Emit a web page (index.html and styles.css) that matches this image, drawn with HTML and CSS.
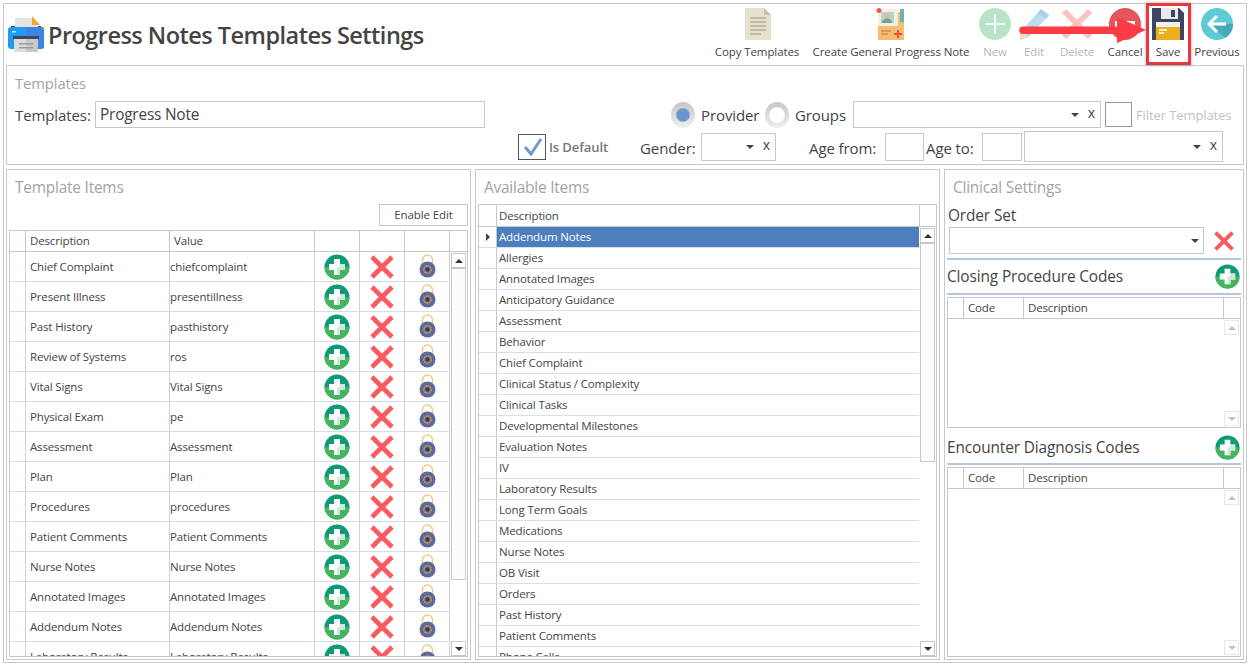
FILE: index.html
```
<!DOCTYPE html>
<html lang="en">
<head>
<meta charset="utf-8">
<title>Progress Notes Templates Settings</title>
<link rel="stylesheet" href="styles.css">
</head>
<body>
<svg class="defs" width="0" height="0">
  <symbol id="plus" viewBox="0 0 26 26">
    <circle cx="13" cy="13" r="12.5" fill="#0f9a76"/>
    <path d="M.5 13a12.500 12.500 0 0 0 25 0z" fill="#44b45f"/>
    <path d="M10 5h6v5h5v6h-5v5h-6v-5H5v-6h5z" fill="#fff"/>
    <path d="M13 13h3v-3h5v6h-5v5h-3z" fill="#cfe8dc"/>
  </symbol>
  <symbol id="cross" viewBox="0 0 26 26">
    <path d="M3 3l20 20M23 3L3 23" stroke="#fb5a60" stroke-width="4.600" fill="none"/>
  </symbol>
  <symbol id="lock" viewBox="0 0 17 24">
    <path d="M3.500 10V6a5 5 0 0 1 10 0v4" fill="none" stroke="#f2c98a" stroke-width="1.500"/>
    <circle cx="8.500" cy="15.500" r="8" fill="#5a689f"/>
    <circle cx="8.500" cy="15.500" r="3.600" fill="none" stroke="#c8953c" stroke-width="1.800" stroke-dasharray="1.800 .6"/>
    <circle cx="8.500" cy="15.500" r="2" fill="#2f3b66"/>
  </symbol>
</svg>
<div class="app">
  <header class="topbar">
    <div class="brand">
      <svg class="logo" width="36" height="36" viewBox="0 0 36 36">
        <path d="M3 10h30v8H3z" fill="#4a4a4a"/>
        <path d="M7 2h17l6 6v14H7z" fill="#e4e4e4"/>
        <path d="M24 0l8 9h-8z" fill="#f5a53a"/>
        <rect y="11" width="36" height="22" rx="3" fill="#1f9bf5"/>
        <path d="M18 11h15a3 3 0 0 1 3 3v16a3 3 0 0 1-3 3H18z" fill="#3d86e0"/>
        <rect x="5" y="20" width="26" height="3" fill="#3d4a5a"/>
        <path d="M6 23h24v13H6z" fill="#dcdcdc"/>
        <path d="M18 23h12v13H18z" fill="#c9c9c9"/>
        <path d="M11 27h14v1.500H11zM11 31h14v1.500H11z" fill="#999"/>
        <rect x="4" y="15" width="4" height="1.500" fill="#bfe3ff"/>
      </svg>
      <h1 class="title">Progress Notes Templates Settings</h1>
    </div>
    <nav class="tools">
      <div class="tool w-copy">
        <svg class="ticon" width="28" height="32" viewBox="1 0 28 32"><path d="M3 0h19l7 7v25H3z" fill="#e6e1cb"/><path d="M22 0l7 7h-7z" fill="#c8c2a8"/><path d="M8 10h16M8 14h16M8 18h16M8 22h16M8 26h11" stroke="#b5af96" stroke-width="1.400"/></svg>
        <span>Copy Templates</span>
      </div>
      <div class="tool w-create">
        <svg class="ticon" width="30" height="32" viewBox="1 0 30 32"><path d="M3 4h26v28H3z" fill="#f5bc74"/><path d="M25 1h4v13h-4z" fill="#66b8b8"/><path d="M3 1h20v17H3z" fill="#fbeedd"/><rect x="6" y="4" width="13" height="11" fill="#a9d8dc"/><circle cx="12" cy="8" r="3" fill="#e8b98e"/><path d="M7 15c0-6 10-6 10 0z" fill="#6fa58c"/><circle cx="4" cy="2.500" r="2.500" fill="#e45a4f"/><path d="M6 23h10M6 26h7" stroke="#b57f3e" stroke-width="1.200"/><path d="M22 22h2v3h3v2h-3v3h-2v-3h-3v-2h3z" fill="#e8503f"/></svg>
        <span>Create General Progress Note</span>
      </div>
      <div class="tool w-new dim">
        <svg class="ticon" width="32" height="32" viewBox="0 0 32 32"><circle cx="16" cy="16" r="16" fill="#b9e2c8"/><path d="M16 6v20M6 16h20" stroke="#fff" stroke-width="1.600"/></svg>
        <span>New</span>
      </div>
      <div class="tool w-edit dim">
        <svg class="ticon" width="32" height="32" viewBox="0 0 32 32"><path d="M23 1l8 6L11 29l-9 3 1-9z" fill="#bcdcf0"/><path d="M23 1l8 6-3 4-8-6z" fill="#a9d0e8"/><path d="M3 23l8 6-9 3z" fill="#f1dcc4"/></svg>
        <span>Edit</span>
      </div>
      <div class="tool w-del dim">
        <svg class="ticon" width="32" height="32" viewBox="0 0 32 32"><path d="M3 3l26 26M29 3L3 29" stroke="#fcc1c1" stroke-width="6" fill="none"/></svg>
        <span>Delete</span>
      </div>
      <div class="tool w-cancel">
        <svg class="ticon" width="32" height="32" viewBox="0 0 32 32"><circle cx="16" cy="16" r="16" fill="#e5565c"/><rect x="6" y="13" width="20" height="6" fill="#fff"/></svg>
        <span>Cancel</span>
      </div>
      <div class="tool w-save">
        <svg class="ticon" width="32" height="32" viewBox="0 0 32 32"><path d="M0 0h27l5 5v27H0z" fill="#3f4560"/><path d="M9 0h17v11H9z" fill="#e9e9e9"/><rect x="19" y="2" width="4" height="7" fill="#3f4560"/><rect x="4" y="14" width="24" height="18" fill="#eef0f2"/><rect x="4" y="19" width="24" height="13" fill="#ecb01f"/><path d="M7 22h8M7 25h5" stroke="#fff" stroke-width="1.300"/></svg>
        <span>Save</span>
      </div>
      <div class="tool w-prev">
        <svg class="ticon" width="32" height="32" viewBox="0 0 32 32"><circle cx="16" cy="16" r="16" fill="#5dcad6"/><path d="M9 16l15 14a16 16 0 0 0 8-14z" fill="#46aab8"/><path d="M16 8l-8 8 8 8M8 16h17" stroke="#fff" stroke-width="3" fill="none"/></svg>
        <span>Previous</span>
      </div>
    </nav>
  </header>

  <section class="panel templates">
    <h2 class="heading">Templates</h2>
    <div class="trow">
      <label class="lbl tl">Templates:</label>
      <div class="box name">Progress Note</div>
      <span class="radio on"></span><span class="lbl provider">Provider</span>
      <span class="radio"></span><span class="lbl groups">Groups</span>
      <div class="box combo c-main"><i class="caret"></i><b class="clr">x</b></div>
      <div class="box small"></div>
      <span class="filter">Filter Templates</span>
    </div>
    <div class="trow second">
      <span class="check"><svg width="25" height="24" viewBox="0 0 25 24"><path d="M5 12l6 7L21 4" fill="none" stroke="#6f9bd2" stroke-width="3"/></svg></span>
      <span class="isdef">Is Default</span>
      <span class="lbl gender">Gender:</span>
      <div class="box combo c-gender"><i class="caret"></i><b class="clr">x</b></div>
      <span class="lbl agefrom">Age from:</span>
      <div class="box agebox"></div>
      <span class="lbl ageto">Age to:</span>
      <div class="box agebox two"></div>
      <div class="box combo c-age"><i class="caret"></i><b class="clr">x</b></div>
    </div>
  </section>

  <main class="columns">
    <section class="panel col">
      <h2 class="heading">Template Items</h2>
      <div class="btnrow"><div class="btn">Enable Edit</div></div>
      <div class="grid items">
        <div class="ghead"><span class="c0"></span><span class="c1">Description</span><span class="c2">Value</span><span class="c3"></span><span class="c3"></span><span class="c3"></span></div>
        <div class="gbody">
          <div class="rows">
            <div class="irow"><span class="c0"></span><span class="c1">Chief Complaint</span><span class="c2">chiefcomplaint</span><span class="c3"><svg class="ip"><use href="#plus"/></svg></span><span class="c3"><svg class="ix"><use href="#cross"/></svg></span><span class="c3"><svg class="il"><use href="#lock"/></svg></span></div>
            <div class="irow"><span class="c0"></span><span class="c1">Present Illness</span><span class="c2">presentillness</span><span class="c3"><svg class="ip"><use href="#plus"/></svg></span><span class="c3"><svg class="ix"><use href="#cross"/></svg></span><span class="c3"><svg class="il"><use href="#lock"/></svg></span></div>
            <div class="irow"><span class="c0"></span><span class="c1">Past History</span><span class="c2">pasthistory</span><span class="c3"><svg class="ip"><use href="#plus"/></svg></span><span class="c3"><svg class="ix"><use href="#cross"/></svg></span><span class="c3"><svg class="il"><use href="#lock"/></svg></span></div>
            <div class="irow"><span class="c0"></span><span class="c1">Review of Systems</span><span class="c2">ros</span><span class="c3"><svg class="ip"><use href="#plus"/></svg></span><span class="c3"><svg class="ix"><use href="#cross"/></svg></span><span class="c3"><svg class="il"><use href="#lock"/></svg></span></div>
            <div class="irow"><span class="c0"></span><span class="c1">Vital Signs</span><span class="c2">Vital Signs</span><span class="c3"><svg class="ip"><use href="#plus"/></svg></span><span class="c3"><svg class="ix"><use href="#cross"/></svg></span><span class="c3"><svg class="il"><use href="#lock"/></svg></span></div>
            <div class="irow"><span class="c0"></span><span class="c1">Physical Exam</span><span class="c2">pe</span><span class="c3"><svg class="ip"><use href="#plus"/></svg></span><span class="c3"><svg class="ix"><use href="#cross"/></svg></span><span class="c3"><svg class="il"><use href="#lock"/></svg></span></div>
            <div class="irow"><span class="c0"></span><span class="c1">Assessment</span><span class="c2">Assessment</span><span class="c3"><svg class="ip"><use href="#plus"/></svg></span><span class="c3"><svg class="ix"><use href="#cross"/></svg></span><span class="c3"><svg class="il"><use href="#lock"/></svg></span></div>
            <div class="irow"><span class="c0"></span><span class="c1">Plan</span><span class="c2">Plan</span><span class="c3"><svg class="ip"><use href="#plus"/></svg></span><span class="c3"><svg class="ix"><use href="#cross"/></svg></span><span class="c3"><svg class="il"><use href="#lock"/></svg></span></div>
            <div class="irow"><span class="c0"></span><span class="c1">Procedures</span><span class="c2">procedures</span><span class="c3"><svg class="ip"><use href="#plus"/></svg></span><span class="c3"><svg class="ix"><use href="#cross"/></svg></span><span class="c3"><svg class="il"><use href="#lock"/></svg></span></div>
            <div class="irow"><span class="c0"></span><span class="c1">Patient Comments</span><span class="c2">Patient Comments</span><span class="c3"><svg class="ip"><use href="#plus"/></svg></span><span class="c3"><svg class="ix"><use href="#cross"/></svg></span><span class="c3"><svg class="il"><use href="#lock"/></svg></span></div>
            <div class="irow"><span class="c0"></span><span class="c1">Nurse Notes</span><span class="c2">Nurse Notes</span><span class="c3"><svg class="ip"><use href="#plus"/></svg></span><span class="c3"><svg class="ix"><use href="#cross"/></svg></span><span class="c3"><svg class="il"><use href="#lock"/></svg></span></div>
            <div class="irow"><span class="c0"></span><span class="c1">Annotated Images</span><span class="c2">Annotated Images</span><span class="c3"><svg class="ip"><use href="#plus"/></svg></span><span class="c3"><svg class="ix"><use href="#cross"/></svg></span><span class="c3"><svg class="il"><use href="#lock"/></svg></span></div>
            <div class="irow"><span class="c0"></span><span class="c1">Addendum Notes</span><span class="c2">Addendum Notes</span><span class="c3"><svg class="ip"><use href="#plus"/></svg></span><span class="c3"><svg class="ix"><use href="#cross"/></svg></span><span class="c3"><svg class="il"><use href="#lock"/></svg></span></div>
            <div class="irow"><span class="c0"></span><span class="c1">Laboratory Results</span><span class="c2">Laboratory Results</span><span class="c3"><svg class="ip"><use href="#plus"/></svg></span><span class="c3"><svg class="ix"><use href="#cross"/></svg></span><span class="c3"><svg class="il"><use href="#lock"/></svg></span></div>
          </div>
          <div class="sbar"><div class="sbtn"><i class="up"></i></div><div class="thumb t-items"></div><div class="sbtn end"><i class="down"></i></div></div>
        </div>
      </div>
    </section>

    <section class="panel col">
      <h2 class="heading">Available Items</h2>
      <div class="grid avail">
        <div class="ahead"><span class="a0"></span><span class="a1">Description</span><span class="a2"></span></div>
        <div class="gbody">
          <div class="rows">
            <div class="arow sel"><span class="a0"><i class="mark"></i></span><span class="a1">Addendum Notes</span></div>
            <div class="arow"><span class="a0"></span><span class="a1">Allergies</span></div>
            <div class="arow"><span class="a0"></span><span class="a1">Annotated Images</span></div>
            <div class="arow"><span class="a0"></span><span class="a1">Anticipatory Guidance</span></div>
            <div class="arow"><span class="a0"></span><span class="a1">Assessment</span></div>
            <div class="arow"><span class="a0"></span><span class="a1">Behavior</span></div>
            <div class="arow"><span class="a0"></span><span class="a1">Chief Complaint</span></div>
            <div class="arow"><span class="a0"></span><span class="a1">Clinical Status / Complexity</span></div>
            <div class="arow"><span class="a0"></span><span class="a1">Clinical Tasks</span></div>
            <div class="arow"><span class="a0"></span><span class="a1">Developmental Milestones</span></div>
            <div class="arow"><span class="a0"></span><span class="a1">Evaluation Notes</span></div>
            <div class="arow"><span class="a0"></span><span class="a1">IV</span></div>
            <div class="arow"><span class="a0"></span><span class="a1">Laboratory Results</span></div>
            <div class="arow"><span class="a0"></span><span class="a1">Long Term Goals</span></div>
            <div class="arow"><span class="a0"></span><span class="a1">Medications</span></div>
            <div class="arow"><span class="a0"></span><span class="a1">Nurse Notes</span></div>
            <div class="arow"><span class="a0"></span><span class="a1">OB Visit</span></div>
            <div class="arow"><span class="a0"></span><span class="a1">Orders</span></div>
            <div class="arow"><span class="a0"></span><span class="a1">Past History</span></div>
            <div class="arow"><span class="a0"></span><span class="a1">Patient Comments</span></div>
            <div class="arow"><span class="a0"></span><span class="a1">Phone Calls</span></div>
          </div>
          <div class="sbar"><div class="sbtn"><i class="up"></i></div><div class="thumb t-avail"></div><div class="sbtn end"><i class="down"></i></div></div>
        </div>
      </div>
    </section>

    <section class="panel col clinical">
      <h2 class="heading">Clinical Settings</h2>
      <div class="sub order">Order Set</div>
      <div class="orderrow">
        <div class="box combo c-order"><i class="caret"></i></div>
        <svg class="ox"><use href="#cross"/></svg>
      </div>
      <div class="rule r1"></div>
      <div class="subrow"><span class="sub">Closing Procedure Codes</span><svg class="sp"><use href="#plus"/></svg></div>
      <div class="grid codes g-closing">
        <div class="chead"><span class="k0"></span><span class="k1">Code</span><span class="k2">Description</span><span class="k3"></span></div>
        <div class="cbody"><div class="sbtn faint"><i class="up"></i></div><div class="sbtn faint end"><i class="down"></i></div></div>
      </div>
      <div class="subrow enc"><span class="sub">Encounter Diagnosis Codes</span><svg class="sp"><use href="#plus"/></svg></div>
      <div class="grid codes g-enc">
        <div class="chead"><span class="k0"></span><span class="k1">Code</span><span class="k2">Description</span><span class="k3"></span></div>
        <div class="cbody"><div class="sbtn faint"><i class="up"></i></div><div class="sbtn faint end"><i class="down"></i></div></div>
      </div>
    </section>
  </main>

  <div class="savebox"></div>
  <svg class="arrow" width="130" height="30" viewBox="0 0 130 30">
    <path d="M4 9.500h94V0l29 13-29 13v-9H4a3.700 3.700 0 0 1 0-7.500z" fill="#fb3c44"/>
  </svg>
</div>
</body>
</html>
```
FILE: styles.css
```
* { box-sizing: border-box; }
html, body { margin: 0; padding: 0; background: #fff; }
body { width: 1249px; height: 664px; overflow: hidden; font-family: "Open Sans", "Noto Sans", sans-serif; color: #444; }
.defs { position: absolute; }
.app { position: relative; margin: 3px 0 0 3px; width: 1244px; height: 660px; border: 1px solid #c8c8c8; padding: 0 2px 2px 2px; display: flex; flex-direction: column; }

.topbar { height: 61px; display: flex; justify-content: space-between; }
.brand { display: flex; align-items: flex-start; padding: 12px 0 0 2px; }
.logo { margin-right: 4px; }
.title { margin: 0; font-size: 23.500px; line-height: 38px; font-weight: 600; color: #444; letter-spacing: -.53px; white-space: nowrap; }
.tools { display: flex; }
.tool { display: flex; flex-direction: column; align-items: center; font-size: 11.500px; line-height: 16px; white-space: nowrap; padding-top: 4px; letter-spacing: -.1px; }
.ticon { display: block; margin-bottom: 4px; flex: none; }
.dim { color: #b4b4b4; }
.w-copy { width: 106px; }
.w-create { width: 162px; }
.w-new { width: 46px; }
.w-edit { width: 32px; }
.w-del { width: 54px; }
.w-cancel { width: 42px; }
.w-save { width: 44px; }
.w-prev { width: 54px; }

.panel { border: 1px solid #c8c8c8; }
.heading { margin: 0; font-size: 15.400px; font-weight: 400; line-height: 20px; color: #a3a3a3; letter-spacing: -.2px; }
.templates { height: 100px; padding: 7px 8px 0; flex: none; }
.templates .heading { font-size: 14.800px; letter-spacing: -.1px; }
.lbl { font-size: 15px; letter-spacing: -.1px; line-height: 26px; white-space: nowrap; }
.box { height: 27px; border: 1px solid #c8c8c8; background: #fff; flex: none; }
.trow { display: flex; align-items: center; margin-top: 8px; height: 27px; }
.tl { width: 76px; }
.name { width: 390px; margin-left: 4px; margin-right: 186px; padding-left: 4px; font-size: 15.400px; line-height: 25px; letter-spacing: -.2px; }
.radio { width: 24px; height: 26px; flex: none; border-radius: 50%; margin-right: 6px; background: radial-gradient(circle, #fff 0 7px, rgba(255,255,255,0) 8.500px), linear-gradient(#c6c6c6, #efefef); }
.radio.on { background: radial-gradient(circle, #6a96cc 0 6px, rgba(106,150,204,0) 7.500px), linear-gradient(#c6c6c6, #efefef); }
.provider { width: 64px; }
.groups { width: 58px; }
.combo { position: relative; }
.caret { position: absolute; right: 21px; top: 11px; border-left: 4px solid transparent; border-right: 4px solid transparent; border-top: 4px solid #444; }
.clr { position: absolute; right: 5px; top: 2px; font-size: 14px; font-weight: 400; line-height: 18px; color: #444; }
.c-main { width: 248px; }
.small { width: 27px; height: 25px; margin-left: 4px; border-color: #999; }
.filter { margin-left: 4px; font-size: 13px; color: #c2c2c2; letter-spacing: -.1px; white-space: nowrap; }
.second { margin-top: 3px; height: 31px; }
.second .lbl { padding-top: 2px; }
.check { width: 28px; height: 26px; margin-left: 503px; border: 1px solid #555; display: flex; align-items: center; justify-content: center; flex: none; }
.isdef { margin-left: 3px; width: 91px; font-size: 13px; font-weight: 600; color: #777; letter-spacing: -.1px; white-space: nowrap; }
.gender { width: 61px; }
.c-gender { width: 75px; height: 28px; }
.agefrom { width: 76px; margin-left: 33px; }
.agebox { width: 39px; height: 28px; }
.ageto { width: 56px; margin-left: 2px; }
.agebox.two { width: 40px; }
.c-age { width: 199px; margin-left: 2px; height: 31px; }
.c-age .caret { top: 13px; }
.c-age .clr { top: 4px; }

.columns { flex: 1; min-height: 0; display: flex; gap: 4px; margin-top: 4px; }
.col { width: 465px; padding: 8px 2px 2px 2px; display: flex; flex-direction: column; min-height: 0; flex: none; }
.col > .heading { padding-left: 6px; flex: none; }
.col.clinical { width: 300px; }

.btnrow { display: flex; justify-content: flex-end; height: 26px; margin-top: 6px; flex: none; }
.btn { width: 89px; height: 22px; border: 1px solid #c8c8c8; font-size: 11.500px; line-height: 20px; text-align: center; letter-spacing: -.1px; }

.grid { border: 1px solid #c8c8c8; display: flex; flex-direction: column; min-height: 0; overflow: hidden; font-size: 11.500px; letter-spacing: -.15px; }
.items { flex: 1; }
.ghead { display: flex; height: 21px; line-height: 20px; flex: none; border-bottom: 1px solid #c8c8c8; }
.ghead span { border-right: 1px solid #c8c8c8; }
.gbody { flex: 1; display: flex; min-height: 0; }
.rows { flex: 1; min-width: 0; overflow: hidden; }
.irow { display: flex; height: 30px; line-height: 29px; border-bottom: 1px solid #d6dde6; }
.irow span { border-right: 1px solid #c9d4e0; }
.c0 { width: 16px; flex: none; }
.c1 { width: 144px; padding-left: 4px; flex: none; white-space: nowrap; }
.c2 { width: 145px; padding-left: 0; flex: none; white-space: nowrap; }
.c3 { width: 45px; flex: none; display: flex; align-items: center; justify-content: center; }
.ghead .c2 { padding-left: 4px; }
.ip { width: 26px; height: 26px; }
.ix { width: 26px; height: 26px; }
.il { width: 17px; height: 24px; margin-bottom: 1px; }

.sbar { width: 17px; flex: none; display: flex; flex-direction: column; align-items: center; padding: 1px 0 0; }
.sbtn { width: 15px; height: 15px; border: 1px solid #c8c8c8; background: #fff; display: flex; align-items: center; justify-content: center; flex: none; }
.sbtn.end { margin-top: auto; }
.thumb { width: 15px; background: #fbfbfb; border: 1px solid #c8c8c8; flex: none; }
.t-items { height: 312px; }
.t-avail { height: 219px; }
.up { border-left: 4px solid transparent; border-right: 4px solid transparent; border-bottom: 4px solid #333; }
.down { border-left: 4px solid transparent; border-right: 4px solid transparent; border-top: 4px solid #333; }

.avail { flex: 1; margin-top: 6px; }
.ahead { display: flex; height: 22px; line-height: 21px; flex: none; border-bottom: 1px solid #c8c8c8; }
.a0 { width: 18px; flex: none; border-right: 1px solid #c8c8c8; display: flex; align-items: center; justify-content: center; }
.a1 { flex: 1; padding-left: 2px; white-space: nowrap; }
.ahead .a1 { width: 423px; flex: none; border-right: 1px solid #c8c8c8; }
.arow { display: flex; height: 21px; line-height: 20px; border-bottom: 1px solid #d9dfe6; }
.arow.sel { background: #4d7fbe; color: #fff; }
.arow.sel .a0 { background: #fff; }
.mark { border-top: 4px solid transparent; border-bottom: 4px solid transparent; border-left: 4px solid #444; }

.sub { font-size: 15.400px; line-height: 20px; color: #444; letter-spacing: -.12px; white-space: nowrap; }
.sub.order { margin-top: 8px; padding-left: 1px; }
.orderrow { display: flex; align-items: center; margin: 1px 0 0 2px; height: 27px; flex: none; }
.c-order { width: 255px; height: 27px; }
.c-order .caret { right: 4px; }
.ox { width: 22px; height: 22px; margin-left: 9px; }
.rule { flex: none; }
.r1 { height: 2px; margin-top: 4px; background: #b4c7e2; }
.subrow { flex: none; height: 35px; padding-right: 1px; display: flex; align-items: center; justify-content: space-between; border-bottom: 2px solid #b4c7e2; margin-bottom: 2px; }
.subrow.enc { margin-top: 4px; height: 33px; }
.sp { width: 25px; height: 25px; }
.g-closing { height: 131px; flex: none; }
.g-enc { flex: 1; }
.codes { width: 294px; }
.chead { display: flex; height: 21px; line-height: 20px; flex: none; border-bottom: 1px solid #c8c8c8; }
.chead span { border-right: 1px solid #c8c8c8; }
.k0 { width: 16px; }
.k1 { width: 60px; padding-left: 4px; }
.k2 { width: 200px; padding-left: 4px; }
.k3 { width: 16px; border-right: 0 !important; }
.cbody { flex: 1; display: flex; flex-direction: column; align-items: flex-end; padding: 1px 1px 1px 0; }
.faint { border-color: #e8e8e8; }
.faint .up { border-bottom-color: #c2c2c2; }
.faint .down { border-top-color: #c2c2c2; }

.savebox { position: absolute; left: 1142px; top: -1px; width: 45px; height: 62px; border: 3px solid #e8383d; box-shadow: 0 0 3px rgba(0,0,0,.35); }
.arrow { position: absolute; left: 1015px; top: 13px; }
```
